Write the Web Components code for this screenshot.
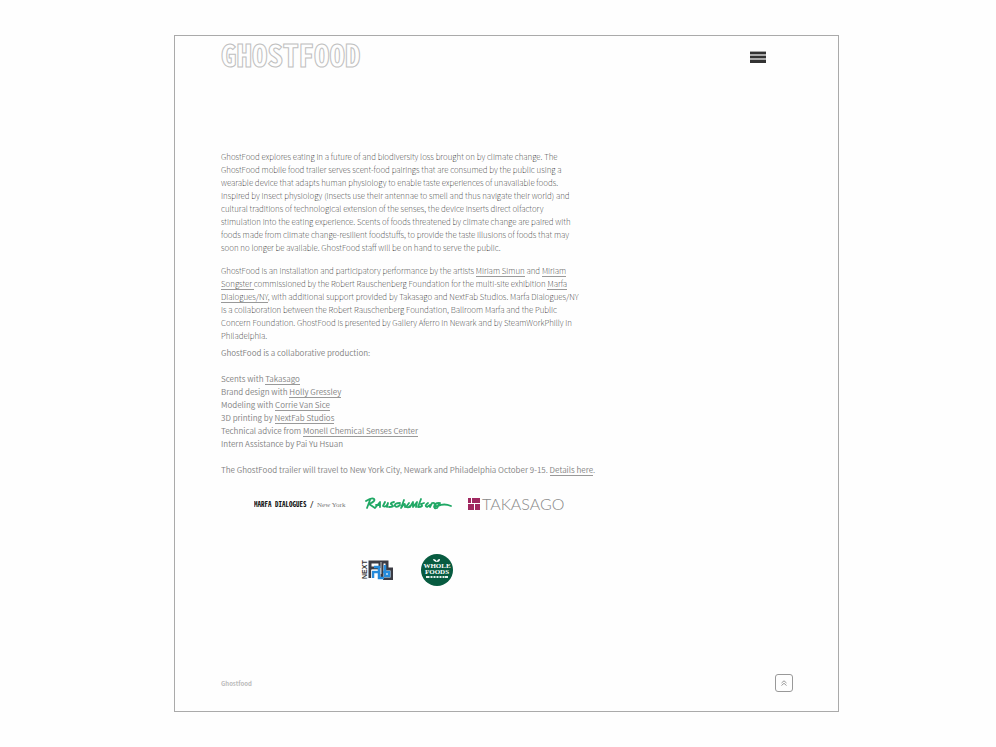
<!DOCTYPE html>
<html lang="en">
<head>
<meta charset="utf-8">
<title>GhostFood</title>
<style>
body{margin:0;background:#fefefe;color:#808080;font:300 8px/13px "Noto Sans CJK SC","Noto Sans",sans-serif}
</style>
</head>
<body>
<ghost-page>
  <ghost-header slot="header"></ghost-header>
  <ghost-about></ghost-about>
  <ghost-sponsors></ghost-sponsors>
  <ghost-footer slot="footer"></ghost-footer>
</ghost-page>
<script>
const define = (name, html) => {
  const t = document.createElement('template');
  t.innerHTML = html;
  customElements.define(name, class extends HTMLElement {
    constructor() {
      super();
      this.attachShadow({mode: 'open'}).append(t.content.cloneNode(true));
    }
  });
};

define('ghost-page', `<style>
:host{display:grid;grid-template-columns:174fr 665fr 157fr;min-height:100vh;box-sizing:border-box;padding:35px 0}
.frame{grid-column:2;display:flex;flex-direction:column;box-sizing:border-box;border:1px solid #aaa;padding:0 45px 0 46px}
main{flex:1}
</style><div class="frame"><slot name="header"></slot><main><slot></slot></main><slot name="footer"></slot></div>`);

define('ghost-header', `<style>
:host{display:flex;justify-content:space-between;align-items:center;height:42px;padding-right:27px}
a{align-self:flex-start;font:700 31px/36px "Noto Sans Mono CJK SC","DejaVu Sans Mono",monospace;color:#fefefe;-webkit-text-stroke:1px #c0c0c0;text-decoration:none}
button{border:0;background:none;padding:0;display:block}
svg{display:block}
</style><a href="#">GHOSTFOOD</a>
<button aria-label="Menu"><svg width="16" height="12"><path fill="#aaa" d="M0 0h16v12H0z"/><path fill="#333" d="M0 1h16v2H0zM0 5h16v2H0zM0 9h16v3H0z"/></svg></button>`);

define('ghost-link', `<style>
:host{display:inline}
a{color:inherit;text-decoration:none;border-bottom:1px solid #999}
</style><a href="#"><slot></slot></a>`);

define('ghost-about', `<style>
:host{display:block;padding-top:72px}
p{margin:0 0 10px;white-space:nowrap}
.intro{font-weight:100;color:#000}
.tight{margin-bottom:4px}
.lead{margin-bottom:13px}
.credits{font-weight:350}
</style>
<p class="intro">GhostFood explores eating in a future of and biodiversity loss brought on by climate change. The<br>
GhostFood mobile food trailer serves scent-food pairings that are consumed by the public using a<br>
wearable device that adapts human physiology to enable taste experiences of unavailable foods.<br>
Inspired by insect physiology (insects use their antennae to smell and thus navigate their world) and<br>
cultural traditions of technological extension of the senses, the device inserts direct olfactory<br>
stimulation into the eating experience. Scents of foods threatened by climate change are paired with<br>
foods made from climate change-resilient foodstuffs, to provide the taste illusions of foods that may<br>
soon no longer be available. GhostFood staff will be on hand to serve the public.</p>
<p class="intro tight">GhostFood is an installation and participatory performance by the artists <ghost-link>Miriam Simun</ghost-link> and <ghost-link>Miriam<br>
Songster </ghost-link>commissioned by the Robert Rauschenberg Foundation for the multi-site exhibition <ghost-link>Marfa<br>
Dialogues/NY</ghost-link>, with additional support provided by Takasago and NextFab Studios. Marfa Dialogues/NY<br>
is a collaboration between the Robert Rauschenberg Foundation, Ballroom Marfa and the Public<br>
Concern Foundation. GhostFood is presented by Gallery Aferro in Newark and by SteamWorkPhilly in<br>
Philadelphia.</p>
<p class="credits lead">GhostFood is a collaborative production:</p>
<p class="credits lead">Scents with <ghost-link>Takasago</ghost-link><br>
Brand design with <ghost-link>Holly Gressley</ghost-link><br>
Modeling with <ghost-link>Corrie Van Sice</ghost-link><br>
3D printing by <ghost-link>NextFab Studios</ghost-link><br>
Technical advice from <ghost-link>Monell Chemical Senses Center</ghost-link><br>
Intern Assistance by Pai Yu Hsuan</p>
<p class="credits">The GhostFood trailer will travel to New York City, Newark and Philadelphia October 9-15. <ghost-link>Details here</ghost-link>.</p>`);

define('ghost-sponsors', `<style>
:host{display:flex;flex-direction:column;gap:37px;width:376px;padding-top:5px}
div{display:flex;justify-content:center;align-items:center}
.one{gap:15px;height:26px}
.two{gap:28px;padding-right:6px}
svg{display:block;flex:none}
</style>
<div class="one">
<svg width="95" height="14" viewBox="0 0 95 14"><text x="0" y="10" font-family="Noto Sans Mono CJK SC, DejaVu Sans Mono, monospace" font-weight="700" font-size="7" fill="#111">MARFA DIALOGUES /</text><text x="63" y="10" font-family="Liberation Serif" font-weight="400" font-size="7" fill="#777">New York</text></svg>
<svg width="89" height="16" viewBox="0 0 89 16" role="img" aria-label="Rauschenberg"><path d="M3 12 6 4M2 5q6-4 8-2t-5 5l6 4 5-6v5M12 9h4M21 6l-2 4q3 2 5-3l-1 4M30 6q-5 1-2 3t-3 2M36 7q-6 0-5 3 2 2 5-1M40 4l-3 8q4-6 4-3v2M45 7l-3 4q3 1 4-1M46 11l3-5v5l4-5-1 5M57 3l-3 8q6 0 3-3l3-1M64 7q-4 3-1 4l3-2M66 11l2-4q4-1 2 4M75 7q-5 0-3 3 2 1 4-3l-3 5q-3 1-2-1M74 10q6-3 13 0" fill="none" stroke="#20a865" stroke-width="1.800" stroke-linecap="round" stroke-linejoin="round"/></svg>
<svg width="96" height="18" viewBox="0 0 96 18"><path fill="#a02860" d="M0 3h12v12H0z"/><path stroke="#fff" d="M0 8.500h12M6.500 8v7M3.500 3v5"/><text x="14" y="15" font-family="Lato" font-weight="300" font-size="16" fill="#888">TAKASAGO</text></svg>
</div>
<div class="two">
<svg width="33" height="20" viewBox="0 0 33 20"><text transform="translate(7 19) rotate(-90)" font-family="Liberation Sans" font-weight="700" font-size="7" fill="#333">NEXT</text><path d="M10 18V2h10v6M22 17V2h5v7h5v10h-9M10 8h8" fill="none" stroke="#3b3b43" stroke-width="3"/><path d="M13 18v-6h6v-5h-5M19 11v7h5M25 5v11h4v-4h-6" fill="none" stroke="#258bdc" stroke-width="2.500"/><path d="M11.500 19v-9h6M21 2v12" fill="none" stroke="#fff" stroke-width=".7"/></svg>
<svg width="32" height="32" viewBox="0 0 32 32"><circle cx="16" cy="16" r="16" fill="#075b40"/><g fill="#fff" font-family="Liberation Serif" font-weight="700" font-size="7" text-anchor="middle"><text x="16" y="14">WHOLE</text><text x="16" y="20">FOODS</text></g><path d="M5 22h22v2H5z" fill="#e5eeea"/><path d="M8 23h16" stroke="#075b40" stroke-dasharray="2 1"/><path d="M15 8q-3-1-3-3 3 0 4 3 0-3 3-3 0 3-3 3" fill="#fff"/></svg>
</div>`);

define('ghost-footer', `<style>
:host{display:flex;justify-content:space-between;align-items:center;padding-bottom:19px}
span{font-weight:700;font-size:6px;color:#bbb}
button{width:18px;height:18px;padding:0;border:1px solid #999;border-radius:3px;background:none;display:grid;place-items:center}
</style><span>Ghostfood</span>
<button aria-label="Back to top"><svg width="6" height="6" viewBox="0 0 6 6"><path d="M.5 3 3 .8 5.500 3M.5 5.500 3 3.300 5.500 5.500" fill="none" stroke="#999"/></svg></button>`);
</script>
</body>
</html>
